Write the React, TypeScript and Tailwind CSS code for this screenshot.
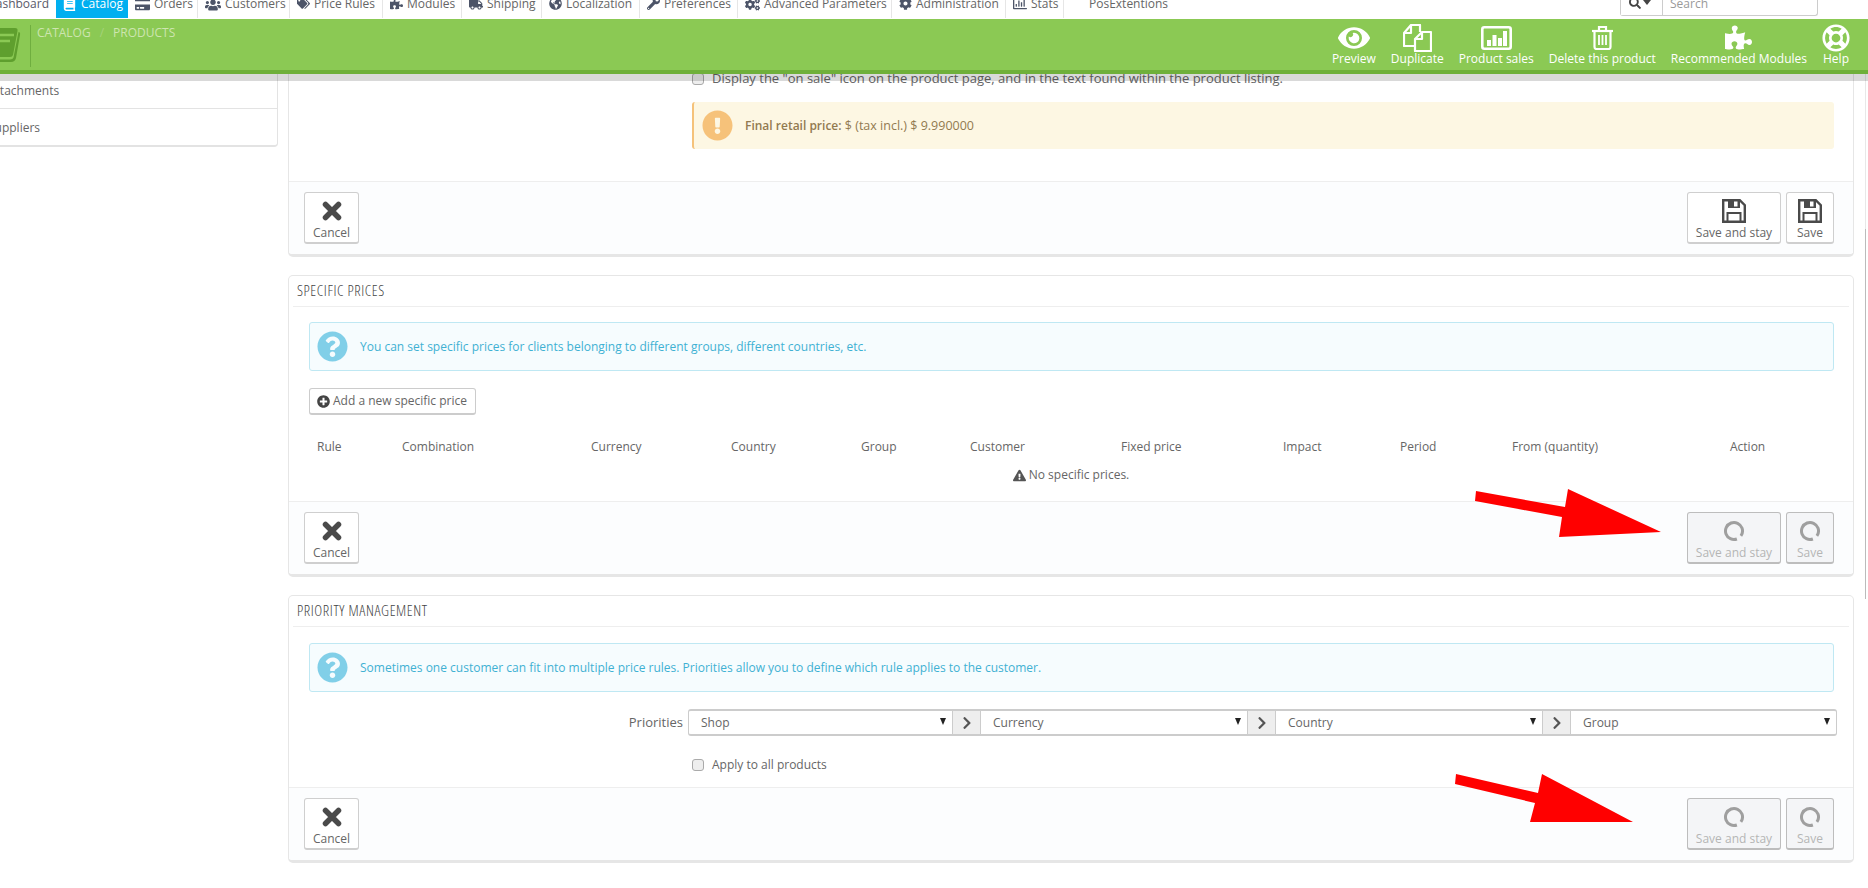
import { ReactNode } from 'react'
import {
  FaBook, FaChevronRight, FaCog, FaCogs, FaCreditCard, FaExclamationCircle, FaExclamationTriangle, FaEye,
  FaGlobeAmericas, FaPlusCircle, FaPuzzlePiece, FaQuestionCircle, FaRegChartBar, FaRegLifeRing,
  FaSearch, FaTags, FaTruck, FaUsers, FaWrench,
} from 'react-icons/fa'

const navItems = [
  { label: 'Orders', icon: <FaCreditCard size={15} />, w: 'w-[70px]' },
  { label: 'Customers', icon: <FaUsers size={16} />, w: 'w-[92px]' },
  { label: 'Price Rules', icon: <FaTags size={13} />, w: 'w-[93px]' },
  { label: 'Modules', icon: <FaPuzzlePiece size={13} />, w: 'w-[79px]' },
  { label: 'Shipping', icon: <FaTruck size={14} />, w: 'w-[80px]' },
  { label: 'Localization', icon: <FaGlobeAmericas size={13} />, w: 'w-[98px]' },
  { label: 'Preferences', icon: <FaWrench size={13} />, w: 'w-[98px]' },
  { label: 'Advanced Parameters', icon: <FaCogs size={15} />, w: 'w-[154px]' },
  { label: 'Administration', icon: <FaCog size={13} />, w: 'w-[114px]' },
  { label: 'Stats', icon: <FaRegChartBar size={14} />, w: 'w-[58px]' },
]

const columns = [
  { label: 'Rule', w: 'w-[85px]' },
  { label: 'Combination', w: 'w-[189px]' },
  { label: 'Currency', w: 'w-[140px]' },
  { label: 'Country', w: 'w-[130px]' },
  { label: 'Group', w: 'w-[109px]' },
  { label: 'Customer', w: 'w-[151px]' },
  { label: 'Fixed price', w: 'w-[162px]' },
  { label: 'Impact', w: 'w-[117px]' },
  { label: 'Period', w: 'w-[112px]' },
  { label: 'From (quantity)', w: 'w-[218px]' },
  { label: 'Action', w: 'w-[100px]' },
]

const DuplicateIcon = () => (
  <svg width="29" height="28" viewBox="0 0 29 28" fill="none" stroke="white" strokeWidth="2.2" strokeLinejoin="round">
    <path d="M17 8V1H8L1 9v13h11" />
    <path d="M8 1v8H1" />
    <path d="M19 8h9v19H12V15z" />
    <path d="M19 8v7h-7" />
  </svg>
)

const SalesIcon = () => (
  <svg width="31" height="24" viewBox="0 0 31 24" fill="white">
    <rect x="1.3" y="1.3" width="28.4" height="21.4" rx="2" fill="none" stroke="white" strokeWidth="2.6" />
    <rect x="6" y="14" width="4" height="6" />
    <rect x="11.5" y="9" width="4" height="11" />
    <rect x="17" y="12" width="4" height="8" />
    <rect x="22" y="5" width="4" height="15" />
  </svg>
)

const TrashIcon = () => (
  <svg width="23" height="25" viewBox="0 0 23 25" fill="none" stroke="white" strokeWidth="2.2">
    <path d="M1 6h21" />
    <path d="M8 6V2h7v4" />
    <path d="M3.5 6v16a2 2 0 0 0 2 2h12a2 2 0 0 0 2-2V6" />
    <path d="M8 10v10M11.5 10v10M15 10v10" strokeWidth="1.8" />
  </svg>
)

const SaveIcon = () => (
  <svg width="24" height="24" viewBox="0 0 24 24" fill="none" stroke="#4a4a4a" strokeWidth="2.4">
    <path d="M1.2 1.2h16.6l5 5v16.6H1.2z" />
    <path d="M6 1h12v8H6z" fill="#4a4a4a" stroke="none" />
    <rect x="12" y="2.5" width="3.5" height="5" fill="white" stroke="none" />
    <path d="M5.5 23v-9h13v9" strokeWidth="2" />
  </svg>
)

const CancelIcon = () => (
  <svg width="20" height="20" viewBox="0 0 20 20" stroke="#4a4a4a" strokeWidth="5.5" strokeLinecap="round">
    <path d="M3.5 3.5l13 13M16.5 3.5l-13 13" />
  </svg>
)

const Spinner = () => (
  <svg width="22" height="22" viewBox="0 0 22 22" fill="none" stroke="#9f9f9f" strokeWidth="3">
    <circle cx="11" cy="11" r="8.5" strokeDasharray="48 5.4" transform="rotate(70 11 11)" />
  </svg>
)

const ToolbarItem = ({ icon, label }: { icon: ReactNode; label: string }) => (
  <div className="flex flex-col items-center">
    <div className="flex h-[31px] items-center">{icon}</div>
    <span className="-mt-[2px] text-[12px] leading-[16px] text-white">{label}</span>
  </div>
)

const ActionButton = ({ icon, label, w, disabled }: { icon: ReactNode; label: string; w: string; disabled?: boolean }) => (
  <div
    className={`flex h-[52px] ${w} flex-col items-center rounded-[3px] border border-b-2 pt-[5px] text-[12px] leading-[18px] ${
      disabled ? 'border-[#bdbdbd] bg-[#f4f5f7] text-[#b5b5b5]' : 'border-[#cfcfcf] bg-white text-[#666]'
    }`}
  >
    <div className="flex h-[26px] items-center">{icon}</div>
    <span>{label}</span>
  </div>
)

const PanelFooter = ({ busy }: { busy?: boolean }) => {
  const saveIcon = busy ? <Spinner /> : <SaveIcon />
  return (
    <div className="flex justify-between rounded-b-[4px] border-t border-[#eeeeee] bg-[#fcfdfe] pt-[10px] pr-[19px] pb-[10px] pl-[15px]">
      <ActionButton w="w-[55px]" label="Cancel" icon={<CancelIcon />} />
      <div className="flex gap-[5px]">
        <ActionButton w="w-[94px]" label="Save and stay" icon={saveIcon} disabled={busy} />
        <ActionButton w="w-[48px]" label="Save" icon={saveIcon} disabled={busy} />
      </div>
    </div>
  )
}

const Panel = ({ title, children, className }: { title?: string; children: ReactNode; className?: string }) => (
  <section className={`rounded-[5px] border border-b-[3px] border-[#e6e6e6] bg-white ${className ?? ''}`}>
    {title && (
      <h3 className="mx-[4px] flex h-[31px] items-center border-b border-[#eeeeee] pb-[2px] pl-[4px] text-[15px] font-light tracking-[0.6px] text-[#444] [font-stretch:75%]">
        {title}
      </h3>
    )}
    {children}
  </section>
)

const InfoAlert = ({ text, className }: { text: string; className: string }) => (
  <div className={`mr-[19px] ml-[20px] flex h-[49px] items-center gap-[12px] rounded-[3px] border border-[#bfe8f3] bg-[#f6fcfe] pl-[7px] text-[12px] text-[#3fb1d3] ${className}`}>
    <FaQuestionCircle size={31} className="text-[#81cfe8]" />
    <span>{text}</span>
  </div>
)

const Checkbox = () => <span className="h-[12px] w-[12px] shrink-0 rounded-[3px] border border-[#aaaaaa] bg-[#eeeeee]" />

const PrioritySelect = ({ label, w, first, last }: { label: string; w: string; first?: boolean; last?: boolean }) => (
  <div className={`flex h-[27px] ${w} items-center justify-between border-y-2 border-[#cccccc] pr-[6px] pl-[12px] ${first ? 'rounded-l-[3px] border-l' : ''} ${last ? 'rounded-r-[3px] border-r' : ''}`}>
    <span>{label}</span>
    <svg width="6" height="7" viewBox="0 0 6 7" className="mb-[3px]">
      <polygon points="0,0 6,0 3,7" fill="#222" />
    </svg>
  </div>
)

const Addon = () => (
  <div className="flex h-[27px] w-[29px] items-center justify-center border border-y-2 border-[#cccccc] bg-[#eeeeee] text-[#555]">
    <FaChevronRight size={14} />
  </div>
)

const App = () => (
  <div className="relative h-screen w-full overflow-hidden bg-white font-['Open_Sans',sans-serif] text-[12px] text-[#666]">
    {/* page is scrolled: header stays, its nav is cut off at the top and the left */}
    <header className="relative z-10">
      <nav className="flex h-[19px] overflow-hidden bg-white">
        <div className="-ml-[40px] flex flex-1 items-start">
          <a className="-mt-[4px] flex h-[22px] w-[96px] justify-end pr-[7px] leading-[16px] text-[#5a5a6a]">Dashboard</a>
          <a className="-mt-[4px] flex h-[22px] w-[72px] items-start gap-[5px] bg-[#00aff0] pl-[7px] leading-[16px] text-white">
            <FaBook size={13} className="mt-[2px]" />
            Catalog
          </a>
          {navItems.map((item) => (
            <a key={item.label} className={`-mt-[4px] flex h-[22px] ${item.w} items-start gap-[4px] border-r border-[#e6e6e6] pl-[7px] leading-[16px] whitespace-nowrap`}>
              <span className="mt-[1px] text-[#4c5468]">{item.icon}</span>
              {item.label}
            </a>
          ))}
          <a className="-mt-[4px] pl-[25px] leading-[16px]">PosExtentions</a>
        </div>
        <div className="mr-[50px] flex h-[16px] items-start rounded-b-[3px] border-x border-b border-[#cccccc]">
          <div className="flex h-full w-[42px] items-start gap-[2px] border-r border-[#cccccc] bg-white pl-[8px] text-[#444]">
            <FaSearch size={12} className="-mt-[3px]" />
            <svg width="8" height="5" viewBox="0 0 8 5"><polygon points="0,0 8,0 4,5" fill="#444" /></svg>
          </div>
          <span className="-mt-[4px] w-[154px] pl-[7px] leading-[16px] text-[#999]">Search</span>
        </div>
      </nav>

      <div className="flex h-[55px] justify-between border-b-4 border-[#6fb03a] bg-[#8bc954]">
        <div className="flex items-start">
          <svg width="21" height="36" viewBox="0 0 21 36" className="mt-[8px]">
            <path d="M0 1h15q3 0 2.500 3l-4.500 24q-.5 2-3 2H0z" fill="#5f9f2e" />
            <path d="M18.500 5q2 0 1.500 3l-4 23q-1 4-5 4H0v-2.500h10q3 0 3.500-2z" fill="#5f9f2e" />
            <path d="M0 8h14M0 14h10" stroke="#8bc954" strokeWidth="2.500" />
          </svg>
          <div className="mt-[6px] ml-[9px] h-[42px] w-px bg-[#6fae3f]" />
          <div className="mt-[6px] ml-[6px] flex gap-[9px] text-[12px] leading-[16px] text-[#cde5b0]">
            <span>CATALOG</span>
            <span className="text-[#a5d27a]">/</span>
            <span>PRODUCTS</span>
          </div>
        </div>
        <div className="flex gap-[15px] pt-[3px] pr-[18px]">
          <ToolbarItem label="Preview" icon={<FaEye size={32} className="text-white" />} />
          <ToolbarItem label="Duplicate" icon={<DuplicateIcon />} />
          <ToolbarItem label="Product sales" icon={<SalesIcon />} />
          <ToolbarItem label="Delete this product" icon={<TrashIcon />} />
          <ToolbarItem label="Recommended Modules" icon={<FaPuzzlePiece size={27} className="text-white" />} />
          <ToolbarItem label="Help" icon={<FaRegLifeRing size={28} className="text-white" />} />
        </div>
      </div>
      {/* header's drop shadow, lies over the content */}
      <div className="absolute top-full right-0 left-0 h-[7px] bg-black/15" />
    </header>

    <div className="flex">
      <aside className="h-[73px] w-[278px] rounded-br-[4px] border-r border-b-2 border-[#e3e3e3]">
        <div className="-ml-[12px] flex h-[35px] items-center border-b border-[#e3e3e3]">Attachments</div>
        <div className="-ml-[12px] flex h-[36px] items-center pt-[2px]">Suppliers</div>
      </aside>

      <main className="ml-[10px] flex w-[1566px] flex-col gap-[18px]">
        <Panel className="rounded-t-none border-t-0">
          <div className="-mt-[5px] ml-[403px] flex h-[20px] items-center gap-[8px]">
            <Checkbox />
            <span className="text-[13px]">Display the "on sale" icon on the product page, and in the text found within the product listing.</span>
          </div>
          <div className="mt-[13px] mr-[19px] mb-[32px] ml-[403px] flex h-[47px] items-center gap-[12px] rounded-[3px] border-l-2 border-[#f5c27a] bg-[#fdf7e3] pl-[8px] text-[#927a50]">
            <FaExclamationCircle size={31} className="text-[#f6c27a]" />
            <span className="pt-[1px] text-[12.5px]">
              <b className="text-[12px] font-semibold">Final retail price:</b> $ (tax incl.) $ 9.990000
            </span>
          </div>
          <PanelFooter />
        </Panel>

        <Panel title="SPECIFIC PRICES">
          <InfoAlert className="mt-[15px]" text="You can set specific prices for clients belonging to different groups, different countries, etc." />
          <div className="mt-[17px] ml-[20px] flex h-[27px] w-[167px] items-center gap-[3px] rounded-[3px] border border-b-2 border-[#cccccc] pl-[7px]">
            <FaPlusCircle size={13} className="text-[#444]" />
            Add a new specific price
          </div>
          <div className="mt-[16px] ml-[28px] flex h-[32px] items-center">
            {columns.map((col) => (
              <span key={col.label} className={col.w}>{col.label}</span>
            ))}
          </div>
          <div className="mb-[14px] flex h-[24px] items-center justify-center gap-[3px]">
            <FaExclamationTriangle size={13} className="text-[#555]" />
            No specific prices.
          </div>
          <PanelFooter busy />
        </Panel>

        <Panel title="PRIORITY MANAGEMENT">
          <InfoAlert className="mt-[16px]" text="Sometimes one customer can fit into multiple price rules. Priorities allow you to define which rule applies to the customer." />
          <div className="mt-[17px] flex items-center justify-end pr-[16px]">
            <span className="mr-[5px] text-[13px]">Priorities</span>
            <PrioritySelect first label="Shop" w="w-[264px]" />
            <Addon />
            <PrioritySelect label="Currency" w="w-[266px]" />
            <Addon />
            <PrioritySelect label="Country" w="w-[266px]" />
            <Addon />
            <PrioritySelect last label="Group" w="w-[266px]" />
          </div>
          <div className="mt-[19px] mb-[12px] ml-[403px] flex h-[20px] items-center gap-[8px]">
            <Checkbox />
            <span>Apply to all products</span>
          </div>
          <PanelFooter busy />
        </Panel>
      </main>

      {/* sliver of the page scrollbar */}
      <div className="ml-[11px] flex w-px flex-col">
        <div className="h-[155px] bg-[#e8e8e8]" />
        <div className="h-[370px] bg-[#bbbbbb]" />
      </div>
    </div>

    {/* red arrows painted over the screenshot */}
    <svg className="pointer-events-none absolute top-0 left-0" width="1868" height="888" viewBox="0 0 1868 888">
      <polygon points="1476,491 1475,501 1562,517 1559,537 1661,532 1568,489 1565,507" fill="#ff0000" />
      <polygon points="1456,774 1455,784 1535,803 1530,822 1633,822 1542,774 1538,793" fill="#ff0000" />
    </svg>
  </div>
)

export default App
